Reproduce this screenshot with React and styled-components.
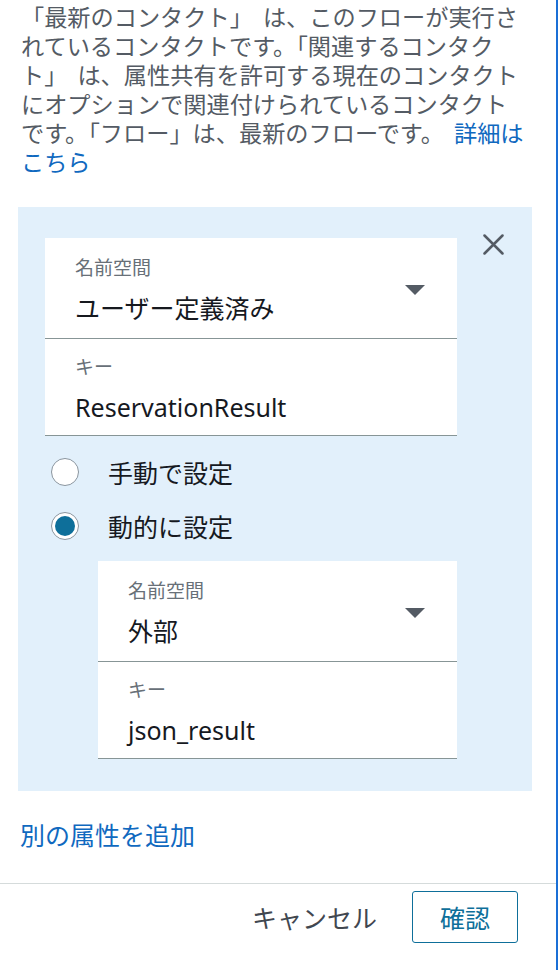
import React from "react";
import styled, { createGlobalStyle } from "styled-components";

const GlobalStyle = createGlobalStyle`
  body {
    margin: 0;
    background: #fff;
    font-family: "Noto Sans", "Noto Sans CJK JP", sans-serif;
  }
`;

const Page = styled.div`
  width: 558px;
  height: 970px;
  box-sizing: border-box;
  border-right: 2px solid #1a6fd6;
  display: flex;
  flex-direction: column;
  overflow: hidden;
`;

const Intro = styled.p`
  margin: 0;
  padding: 3px 0 0 21px;
  font-size: 23.2px;
  line-height: 29px;
  color: #545b64;
  white-space: nowrap;
  word-spacing: 4px;
`;

const Link = styled.a`
  color: #1069bf;
  text-decoration: none;
  cursor: pointer;
`;

const Panel = styled.div`
  margin: 30px 24px 0 18px;
  padding: 31px 0 32px 27px;
  background: #e2f0fb;
  display: flex;
  align-items: flex-start;
`;

const Column = styled.div`
  width: 412px;
  display: flex;
  flex-direction: column;
`;

const CloseButton = styled.button`
  margin: -4px 0 0 26px;
  padding: 0;
  border: none;
  background: none;
  width: 21px;
  height: 21px;
  cursor: pointer;
  display: flex;
`;

const Form = styled.div`
  background: #fff;
  margin-left: ${(p) => p.$indent || 0}px;
  display: flex;
  flex-direction: column;
`;

const Field = styled.div`
  display: flex;
  align-items: center;
  padding: ${(p) => (p.$compact ? "16px 32px 12px 30px" : "18px 32px 14px 30px")};
  border-bottom: 1px solid #879596;
`;

const FieldBody = styled.div`
  flex: 1;
  display: flex;
  flex-direction: column;
  gap: 12px;
`;

const Label = styled.div`
  font-size: 19px;
  line-height: 24px;
  color: #687078;
`;

const Value = styled.div`
  font-size: 25px;
  line-height: 32px;
  color: #16191f;
`;

const Caret = styled.span`
  width: 0;
  height: 0;
  border-left: 10px solid transparent;
  border-right: 10px solid transparent;
  border-top: 10px solid #545b64;
`;

const RadioGroup = styled.div`
  display: flex;
  flex-direction: column;
  gap: 14px;
  margin: 16px 0 15px 6px;
`;

const RadioRow = styled.label`
  display: flex;
  align-items: center;
  gap: 29px;
  height: 40px;
  font-size: 25px;
  color: #16191f;
  cursor: pointer;
`;

const RadioDot = styled.span`
  position: relative;
  width: 28px;
  height: 28px;
  box-sizing: border-box;
  border-radius: 50%;
  border: 1.5px solid #8a959f;
  background: #fff;

  &::after {
    content: "";
    display: ${(p) => (p.$checked ? "block" : "none")};
    position: absolute;
    inset: 3px;
    border-radius: 50%;
    background: #0e6f9a;
  }
`;

const AddLink = styled(Link)`
  margin: 28px 0 0 20px;
  font-size: 25px;
  line-height: 32px;
  align-self: flex-start;
`;

const Footer = styled.div`
  margin-top: 32px;
  border-top: 1px solid #d5dbdb;
  padding: 7px 38px 0 0;
  display: flex;
  justify-content: flex-end;
  align-items: center;
  gap: 35px;
`;

const CancelButton = styled.button`
  border: none;
  background: none;
  padding: 0;
  font-family: inherit;
  font-size: 25px;
  color: #414750;
  cursor: pointer;
`;

const ConfirmButton = styled.button`
  width: 106px;
  height: 52px;
  box-sizing: border-box;
  border: 1.5px solid #0e6f9a;
  border-radius: 3px;
  background: #fff;
  font-family: inherit;
  font-size: 25px;
  color: #0e6f9a;
  cursor: pointer;
`;

const SelectField = ({ label, value }) => (
  <Field>
    <FieldBody>
      <Label>{label}</Label>
      <Value>{value}</Value>
    </FieldBody>
    <Caret />
  </Field>
);

const TextField = ({ label, value }) => (
  <Field $compact>
    <FieldBody>
      <Label>{label}</Label>
      <Value>{value}</Value>
    </FieldBody>
  </Field>
);

const App = () => {
  return (
    <Page>
      <GlobalStyle />
      <Intro>
        「最新のコンタクト」 は、このフローが実行さ
        <br />
        れているコンタクトです。「関連するコンタク
        <br />
        ト」 は、属性共有を許可する現在のコンタクト
        <br />
        にオプションで関連付けられているコンタクト
        <br />
        です。「フロー」は、最新のフローです。{" "}
        <Link>
          詳細は
          <br />
          こちら
        </Link>
      </Intro>

      <Panel>
        <Column>
          <Form>
            <SelectField label="名前空間" value="ユーザー定義済み" />
            <TextField label="キー" value="ReservationResult" />
          </Form>

          <RadioGroup>
            <RadioRow>
              <RadioDot />
              手動で設定
            </RadioRow>
            <RadioRow>
              <RadioDot $checked />
              動的に設定
            </RadioRow>
          </RadioGroup>

          <Form $indent={53}>
            <SelectField label="名前空間" value="外部" />
            <TextField label="キー" value="json_result" />
          </Form>
        </Column>

        <CloseButton aria-label="削除">
          <svg width="21" height="21" viewBox="0 0 21 21">
            <path
              d="M1.5 1.5 L19.5 19.5 M19.5 1.5 L1.5 19.5"
              stroke="#545b64"
              strokeWidth="2.5"
              strokeLinecap="round"
            />
          </svg>
        </CloseButton>
      </Panel>

      <AddLink>別の属性を追加</AddLink>

      <Footer>
        <CancelButton>キャンセル</CancelButton>
        <ConfirmButton>確認</ConfirmButton>
      </Footer>
    </Page>
  );
};

export default App;
